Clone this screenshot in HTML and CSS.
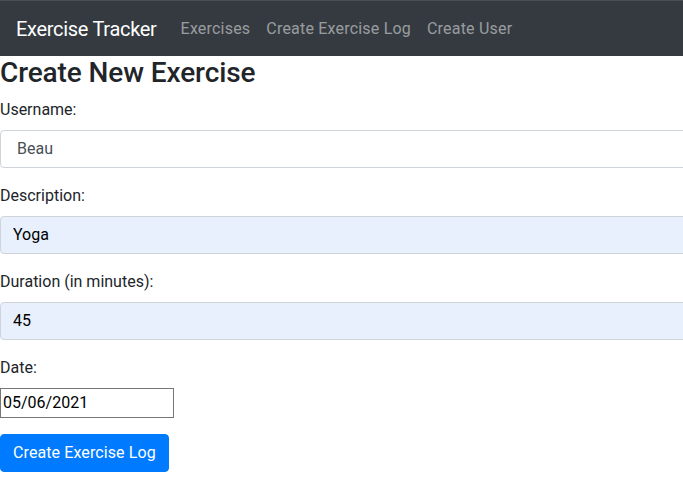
FILE: index.html
```html
<!DOCTYPE html>
<html lang="en">
<head>
<meta charset="utf-8">
<title>Exercise Tracker</title>
<link rel="stylesheet" href="styles.css">
</head>
<body>
<nav class="navbar">
  <a class="brand" href="#">Exercise Tracker</a>
  <ul class="nav">
    <li><a class="nav-link" href="#">Exercises</a></li>
    <li><a class="nav-link" href="#">Create Exercise Log</a></li>
    <li><a class="nav-link" href="#">Create User</a></li>
  </ul>
</nav>
<main class="container">
  <h3 class="title">Create New Exercise</h3>
  <form class="form">
    <div class="form-group">
      <label class="label">Username:</label>
      <div class="form-control select">Beau</div>
    </div>
    <div class="form-group">
      <label class="label">Description:</label>
      <input class="form-control autofill" type="text" value="Yoga">
    </div>
    <div class="form-group">
      <label class="label">Duration (in minutes):</label>
      <input class="form-control autofill" type="text" value="45">
    </div>
    <div class="form-group">
      <label class="label">Date:</label>
      <div><input class="date-input" type="text" value="05/06/2021"></div>
    </div>
    <div class="form-group">
      <button class="btn" type="button">Create Exercise Log</button>
    </div>
  </form>
</main>
</body>
</html>
```
FILE: styles.css
```css
* { box-sizing: border-box; }
html, body {
  margin: 0;
  padding: 0;
  overflow: hidden;
}
body {
  font-family: Roboto, "Noto Sans", "Liberation Sans", sans-serif;
  font-size: 16px;
  line-height: 1.5;
  color: #212529;
  background: #fff;
}
.navbar {
  display: flex;
  align-items: center;
  background: #343a40;
  padding: 8px 16px;
  border-top: 1px solid #4a4f55;
  height: 56px;
}
.brand {
  color: #fff;
  text-decoration: none;
  font-size: 20px;
  line-height: 30px;
  padding: 5px 0;
  margin-right: 16px;
  letter-spacing: -0.3px;
}
.nav {
  display: flex;
  list-style: none;
  margin: 0;
  padding: 0;
}
.nav-link {
  display: block;
  padding: 8px 8px;
  color: rgba(255,255,255,0.5);
  text-decoration: none;
  font-size: 16px;
  line-height: 24px;
  letter-spacing: 0.2px;
}
.container {
  padding: 0;
}
.title {
  margin: 0 0 8px 0;
  font-size: 28px;
  font-weight: 500;
  line-height: 1.2;
  letter-spacing: -0.1px;
}
.form-group {
  margin-bottom: 16px;
}
.label {
  display: inline-block;
  margin-bottom: 8px;
}
.form-control {
  display: block;
  width: calc(100% + 24px);
  height: 38px;
  padding: 6px 12px;
  font-family: inherit;
  font-size: 16px;
  line-height: 24px;
  color: #495057;
  background: #fff;
  border: 1px solid #ced4da;
  border-radius: 4px;
}
.select {
  padding-left: 16px;
}
.autofill {
  background: #e8f0fe;
  color: #000;
}
.date-input {
  width: 174px;
  height: 30px;
  padding: 1px 2px;
  font-family: inherit;
  font-size: 16px;
  color: #000;
  border: 1px solid #767676;
  border-radius: 0;
  background: #fff;
}
.btn {
  display: inline-block;
  font-family: inherit;
  font-size: 16px;
  line-height: 24px;
  padding: 6px 12px;
  color: #fff;
  background: #007bff;
  border: 1px solid #007bff;
  border-radius: 4px;
  letter-spacing: 0.1px;
}
```
